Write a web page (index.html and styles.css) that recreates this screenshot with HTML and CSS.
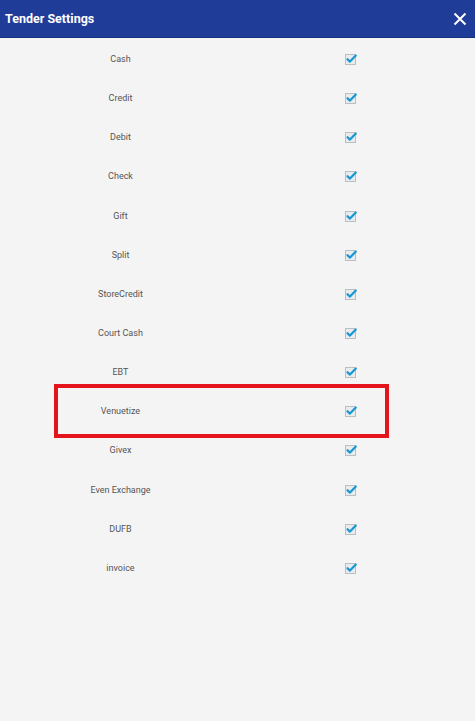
FILE: index.html
```html
<!DOCTYPE html>
<html>
<head>
<meta charset="utf-8">
<link rel="stylesheet" href="styles.css">
</head>
<body>
<div class="app">
  <header class="bar">
    <span class="title">Tender Settings</span>
    <svg class="close" width="14" height="14" viewBox="0 0 14 14"><path d="M1.5 1.5 L12.5 12.5 M12.5 1.5 L1.5 12.5" stroke="#fff" stroke-width="2" fill="none"/></svg>
  </header>
  <main class="list">
    <div class="row"><span class="label">Cash</span><span class="cb"><svg width="14" height="14" viewBox="0 0 14 14"><rect x="1.5" y="2.5" width="10" height="10" fill="#e9ecef" stroke="#b9bec3"/><path d="M3.5 7.2 L6 9.6 L11.8 3.6" stroke="#1696d2" stroke-width="2.2" fill="none" stroke-linecap="round" stroke-linejoin="round"/></svg></span></div>
    <div class="row"><span class="label">Credit</span><span class="cb"><svg width="14" height="14" viewBox="0 0 14 14"><rect x="1.5" y="2.5" width="10" height="10" fill="#e9ecef" stroke="#b9bec3"/><path d="M3.5 7.2 L6 9.6 L11.8 3.6" stroke="#1696d2" stroke-width="2.2" fill="none" stroke-linecap="round" stroke-linejoin="round"/></svg></span></div>
    <div class="row"><span class="label">Debit</span><span class="cb"><svg width="14" height="14" viewBox="0 0 14 14"><rect x="1.5" y="2.5" width="10" height="10" fill="#e9ecef" stroke="#b9bec3"/><path d="M3.5 7.2 L6 9.6 L11.8 3.6" stroke="#1696d2" stroke-width="2.2" fill="none" stroke-linecap="round" stroke-linejoin="round"/></svg></span></div>
    <div class="row"><span class="label">Check</span><span class="cb"><svg width="14" height="14" viewBox="0 0 14 14"><rect x="1.5" y="2.5" width="10" height="10" fill="#e9ecef" stroke="#b9bec3"/><path d="M3.5 7.2 L6 9.6 L11.8 3.6" stroke="#1696d2" stroke-width="2.2" fill="none" stroke-linecap="round" stroke-linejoin="round"/></svg></span></div>
    <div class="row"><span class="label">Gift</span><span class="cb"><svg width="14" height="14" viewBox="0 0 14 14"><rect x="1.5" y="2.5" width="10" height="10" fill="#e9ecef" stroke="#b9bec3"/><path d="M3.5 7.2 L6 9.6 L11.8 3.6" stroke="#1696d2" stroke-width="2.2" fill="none" stroke-linecap="round" stroke-linejoin="round"/></svg></span></div>
    <div class="row"><span class="label">Split</span><span class="cb"><svg width="14" height="14" viewBox="0 0 14 14"><rect x="1.5" y="2.5" width="10" height="10" fill="#e9ecef" stroke="#b9bec3"/><path d="M3.5 7.2 L6 9.6 L11.8 3.6" stroke="#1696d2" stroke-width="2.2" fill="none" stroke-linecap="round" stroke-linejoin="round"/></svg></span></div>
    <div class="row"><span class="label">StoreCredit</span><span class="cb"><svg width="14" height="14" viewBox="0 0 14 14"><rect x="1.5" y="2.5" width="10" height="10" fill="#e9ecef" stroke="#b9bec3"/><path d="M3.5 7.2 L6 9.6 L11.8 3.6" stroke="#1696d2" stroke-width="2.2" fill="none" stroke-linecap="round" stroke-linejoin="round"/></svg></span></div>
    <div class="row"><span class="label">Court Cash</span><span class="cb"><svg width="14" height="14" viewBox="0 0 14 14"><rect x="1.5" y="2.5" width="10" height="10" fill="#e9ecef" stroke="#b9bec3"/><path d="M3.5 7.2 L6 9.6 L11.8 3.6" stroke="#1696d2" stroke-width="2.2" fill="none" stroke-linecap="round" stroke-linejoin="round"/></svg></span></div>
    <div class="row"><span class="label">EBT</span><span class="cb"><svg width="14" height="14" viewBox="0 0 14 14"><rect x="1.5" y="2.5" width="10" height="10" fill="#e9ecef" stroke="#b9bec3"/><path d="M3.5 7.2 L6 9.6 L11.8 3.6" stroke="#1696d2" stroke-width="2.2" fill="none" stroke-linecap="round" stroke-linejoin="round"/></svg></span></div>
    <div class="row highlighted"><span class="label">Venuetize</span><span class="cb"><svg width="14" height="14" viewBox="0 0 14 14"><rect x="1.5" y="2.5" width="10" height="10" fill="#e9ecef" stroke="#b9bec3"/><path d="M3.5 7.2 L6 9.6 L11.8 3.6" stroke="#1696d2" stroke-width="2.2" fill="none" stroke-linecap="round" stroke-linejoin="round"/></svg></span><span class="mark"></span></div>
    <div class="row"><span class="label">Givex</span><span class="cb"><svg width="14" height="14" viewBox="0 0 14 14"><rect x="1.5" y="2.5" width="10" height="10" fill="#e9ecef" stroke="#b9bec3"/><path d="M3.5 7.2 L6 9.6 L11.8 3.6" stroke="#1696d2" stroke-width="2.2" fill="none" stroke-linecap="round" stroke-linejoin="round"/></svg></span></div>
    <div class="row"><span class="label">Even Exchange</span><span class="cb"><svg width="14" height="14" viewBox="0 0 14 14"><rect x="1.5" y="2.5" width="10" height="10" fill="#e9ecef" stroke="#b9bec3"/><path d="M3.5 7.2 L6 9.6 L11.8 3.6" stroke="#1696d2" stroke-width="2.2" fill="none" stroke-linecap="round" stroke-linejoin="round"/></svg></span></div>
    <div class="row"><span class="label">DUFB</span><span class="cb"><svg width="14" height="14" viewBox="0 0 14 14"><rect x="1.5" y="2.5" width="10" height="10" fill="#e9ecef" stroke="#b9bec3"/><path d="M3.5 7.2 L6 9.6 L11.8 3.6" stroke="#1696d2" stroke-width="2.2" fill="none" stroke-linecap="round" stroke-linejoin="round"/></svg></span></div>
    <div class="row"><span class="label">invoice</span><span class="cb"><svg width="14" height="14" viewBox="0 0 14 14"><rect x="1.5" y="2.5" width="10" height="10" fill="#e9ecef" stroke="#b9bec3"/><path d="M3.5 7.2 L6 9.6 L11.8 3.6" stroke="#1696d2" stroke-width="2.2" fill="none" stroke-linecap="round" stroke-linejoin="round"/></svg></span></div>
  </main>
</div>
</body>
</html>
```
FILE: styles.css
```css
html, body {
  margin: 0;
  padding: 0;
  background: #f4f4f4;
}
.app {
  width: 475px;
  height: 721px;
  font-family: Roboto, "Liberation Sans", sans-serif;
  background: #f4f4f4;
}
.bar {
  height: 37px;
  background: #1f3c98;
  border-bottom: 1px solid #17307e;
  display: flex;
  align-items: center;
  justify-content: space-between;
  padding: 0 8px 0 5px;
}
.title {
  color: #fff;
  font-weight: 700;
  font-size: 12.5px;
}
.close {
  display: block;
}
.list {
  padding-top: 1.5px;
}
.row {
  position: relative;
  height: 39.15px;
  display: grid;
  grid-template-columns: 241px 219px;
  align-items: center;
  justify-items: center;
}
.label {
  font-size: 9px;
  color: #555;
}
.cb {
  display: flex;
}
.cb svg {
  display: block;
}
.mark {
  position: absolute;
  left: 54px;
  top: -8px;
  width: 327px;
  height: 46px;
  border: 4px solid #e3141b;
}
```
